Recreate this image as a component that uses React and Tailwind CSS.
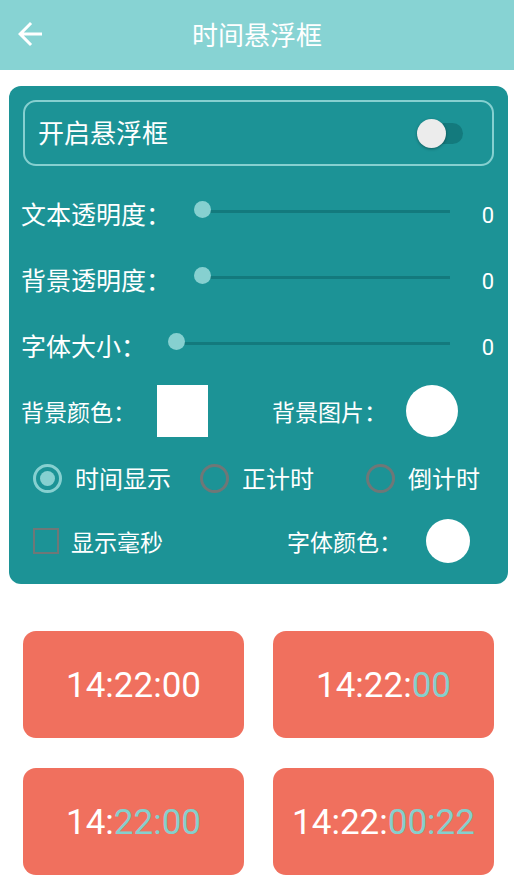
import React, {useState} from "react";

const cjk = {fontFamily: '"Noto Sans CJK SC", "Noto Sans", sans-serif'};
const roboto = {fontFamily: 'Roboto, "Noto Sans", sans-serif'};

const SliderRow = ({label, value, labelWidth}) => (
    <div className="flex items-center h-[66px] pl-[12px]">
        <span className="text-[25px] text-white leading-none shrink-0" style={{...cjk, width: labelWidth}}>{label}</span>
        <div className="relative flex-1 h-[18px] flex items-center">
            <div className="ml-[9px] w-full h-[3px] bg-[#137a7d] -mt-[4px]"></div>
            <div className="absolute left-0 -top-[3px] w-[17px] h-[17px] rounded-full bg-[#86d0d0]"></div>
        </div>
        <span className="w-[58px] pr-[14px] pt-[5px] text-right text-[22px] text-white leading-none" style={roboto}>{value}</span>
    </div>
);

const Radio = ({checked, label, width}) => (
    <div className="flex items-center shrink-0" style={{width}}>
        <div className={`w-[29px] h-[29px] rounded-full border-[3px] flex items-center justify-center ${
            checked ? "border-[#86d0d0]" : "border-[#6f7777]"
        }`}>
            {checked && <div className="w-[15px] h-[15px] rounded-full bg-[#86d0d0]"></div>}
        </div>
        <span className="ml-[13px] text-[24px] text-white leading-none" style={cjk}>{label}</span>
    </div>
);

const TimeCard = ({white, teal}) => (
    <div className="h-[107px] rounded-[13px] bg-[#f0705e] flex items-center justify-center">
        <span className="text-[35px] text-white leading-none pt-[2px]" style={roboto}>
            {white}<span className="text-[#86cfcc]">{teal}</span>
        </span>
    </div>
);

const App = () => {
    const [mode, setMode] = useState(0);

    return (
        <div className="w-[514px] h-[889px] bg-white overflow-hidden">
            {/* header */}
            <div className="relative h-[70px] bg-[#87d3d3] flex items-center justify-center">
                <svg className="absolute left-[12px] top-[16px]" width="36" height="36" viewBox="0 0 24 24" fill="white">
                    <path d="M20 11H7.83l5.59-5.59L12 4l-8 8 8 8 1.41-1.41L7.83 13H20v-2z"/>
                </svg>
                <span className="text-[26px] text-white leading-none -mt-[3px]" style={cjk}>时间悬浮框</span>
            </div>

            {/* settings panel */}
            <div className="mt-[16px] ml-[9px] mr-[6px] h-[498px] rounded-[12px] bg-[#1c9396] pt-[14px]">
                <div className="mx-[14px] h-[66px] rounded-[13px] border-2 border-[#86d0d0] flex items-center justify-between pl-[13px] pr-[29px]">
                    <span className="text-[26px] text-white leading-none -mt-[2px]" style={cjk}>开启悬浮框</span>
                    <div className="relative w-[46px] h-[29px]">
                        <div className="absolute right-0 top-[4px] w-[36px] h-[21px] rounded-full bg-[#137a7d]"></div>
                        <div className="absolute left-0 top-0 w-[29px] h-[29px] rounded-full bg-[#ececec] shadow-[0_1px_3px_rgba(0,0,0,0.35)]"></div>
                    </div>
                </div>

                <div className="mt-[14px]">
                    <SliderRow label="文本透明度：" value="0" labelWidth={173}/>
                    <SliderRow label="背景透明度：" value="0" labelWidth={173}/>
                    <SliderRow label="字体大小：" value="0" labelWidth={147}/>
                </div>

                <div className="flex items-center h-[66px] pl-[12px]">
                    <span className="w-[136px] text-[23px] text-white leading-none" style={cjk}>背景颜色：</span>
                    <div className="w-[51px] h-[52px] bg-white"></div>
                    <span className="ml-[64px] w-[134px] text-[23px] text-white leading-none" style={cjk}>背景图片：</span>
                    <div className="w-[52px] h-[52px] rounded-full bg-white"></div>
                </div>

                <div className="flex items-center h-[66px] pl-[24px] pt-[2px]" onClick={() => setMode((mode + 1) % 3)}>
                    <Radio checked={mode === 0} label="时间显示" width={167}/>
                    <Radio checked={mode === 1} label="正计时" width={166}/>
                    <Radio checked={mode === 2} label="倒计时" width={140}/>
                </div>

                <div className="flex items-center h-[62px] pl-[24px]">
                    <div className="w-[26px] h-[26px] border-2 border-[#6f7777]"></div>
                    <span className="ml-[12px] w-[216px] text-[23px] text-white leading-none" style={cjk}>显示毫秒</span>
                    <span className="w-[139px] text-[23px] text-white leading-none" style={cjk}>字体颜色：</span>
                    <div className="w-[44px] h-[44px] rounded-full bg-white"></div>
                </div>
            </div>

            {/* preview cards */}
            <div className="grid grid-cols-2 gap-x-[29px] gap-y-[30px] pl-[23px] pr-[20px] mt-[47px]">
                <TimeCard white="14:22:00" teal=""/>
                <TimeCard white="14:22:" teal="00"/>
                <TimeCard white="14:" teal="22:00"/>
                <TimeCard white="14:22:" teal="00:22"/>
            </div>
        </div>
    );
};

export default App;
